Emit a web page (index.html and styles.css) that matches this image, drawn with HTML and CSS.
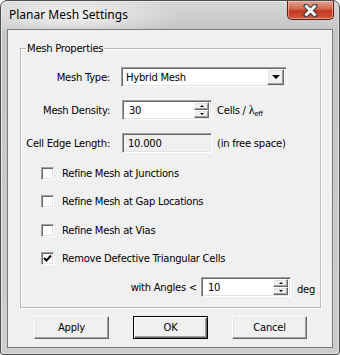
FILE: index.html
```html
<!DOCTYPE html>
<html lang="en">
<head>
    <meta charset="UTF-8">
    <title>Planar Mesh Settings</title>
    <link rel="stylesheet" href="styles.css">
</head>
<body>
    <div class="window">
        <div class="titlebar">
            <span class="title">Planar Mesh Settings</span>
            <div class="close">
                <svg width="17" height="13" viewBox="0 0 17 13">
                    <path d="M4 2 L13 11 M13 2 L4 11" stroke="#3a3a3a" stroke-width="5" stroke-linecap="round"/>
                    <path d="M4.5 2.5 L12.5 10.5 M12.5 2.5 L4.5 10.5" stroke="#ffffff" stroke-width="3" stroke-linecap="square"/>
                </svg>
            </div>
        </div>

        <div class="client">
            <div class="group">
                <span class="group-title">Mesh Properties</span>

                <div class="row first">
                    <label class="caption">Mesh Type:</label>
                    <div class="combo">
                        <span class="combo-text">Hybrid Mesh</span>
                        <span class="combo-btn"><span class="arrow-down"></span></span>
                    </div>
                </div>

                <div class="row">
                    <label class="caption">Mesh Density:</label>
                    <div class="spin">
                        <span class="spin-text">30</span>
                        <span class="spin-btns">
                            <span class="spin-btn"><span class="tri-up"></span></span>
                            <span class="spin-btn"><span class="tri-down"></span></span>
                        </span>
                    </div>
                    <span class="unit">Cells / <span class="lambda">λ</span><sub>eff</sub></span>
                </div>

                <div class="row">
                    <label class="caption">Cell Edge Length:</label>
                    <div class="field readonly">10.000</div>
                    <span class="unit">(in free space)</span>
                </div>

                <div class="checks">
                    <div class="check-row"><span class="box"></span>Refine Mesh at Junctions</div>
                    <div class="check-row"><span class="box"></span>Refine Mesh at Gap Locations</div>
                    <div class="check-row"><span class="box"></span>Refine Mesh at Vias</div>
                    <div class="check-row"><span class="box checked">
                        <svg width="9" height="9" viewBox="0 0 9 9"><path d="M1 4 L3.5 6.5 L8 1.5" stroke="#000" stroke-width="2" fill="none"/></svg>
                    </span>Remove Defective Triangular Cells</div>
                </div>

                <div class="row angles">
                    <label class="caption">with Angles &lt;</label>
                    <div class="spin">
                        <span class="spin-text">10</span>
                        <span class="spin-btns">
                            <span class="spin-btn"><span class="tri-up"></span></span>
                            <span class="spin-btn"><span class="tri-down"></span></span>
                        </span>
                    </div>
                    <span class="unit deg">deg</span>
                </div>
            </div>

            <div class="buttons">
                <button class="btn">Apply</button>
                <button class="btn default">OK</button>
                <button class="btn">Cancel</button>
            </div>
        </div>
    </div>
</body>
</html>
```

FILE: styles.css
```css
* {
    box-sizing: border-box;
}

body {
    margin: 0;
    background: #ffffff;
    font-family: "DejaVu Sans", Tahoma, sans-serif;
    font-size: 10px;
    letter-spacing: -0.25px;
    color: #000;
}

.window {
    width: 340px;
    height: 355px;
    border: 1px solid #4e4e4e;
    border-radius: 7px 7px 3px 3px;
    background:
        radial-gradient(ellipse 110px 22px at 70px 14px, rgba(255, 255, 255, 0.75), rgba(255, 255, 255, 0) 100%),
        linear-gradient(#d6d6d6, #c6c6c6 30px, #cdcdcd);
    box-shadow: inset 1px 1px 0 #e8e8e8, inset -1px -1px 0 #e0e0e0;
}

.titlebar {
    height: 28px;
    display: flex;
    justify-content: space-between;
    align-items: flex-start;
    padding-left: 8px;
}

.title {
    font-family: "Noto Sans", "Open Sans", sans-serif;
    font-size: 12px;
    letter-spacing: 0;
    line-height: 28px;
    color: #000;
}

.close {
    width: 47px;
    height: 19px;
    margin-right: 5px;
    border: 1px solid #5a2018;
    border-top: none;
    border-radius: 0 0 5px 5px;
    background: linear-gradient(#e2a594, #d3634c 45%, #c0391f 55%, #cf5b3f);
    display: flex;
    align-items: center;
    justify-content: center;
    box-shadow: inset 0 0 0 1px rgba(255, 210, 200, 0.5);
}

.client {
    margin: 0 6px;
    height: 319px;
    border: 1px solid #7c7c7c;
    background: #f0f0f0;
}

.group {
    position: relative;
    margin: 18px 11px 0 12px;
    height: 260px;
    border: 1px solid #b9b9b9;
    box-shadow: inset 1px 1px 0 #fff, 1px 1px 0 #fff;
    padding-top: 18px;
}

.group-title {
    position: absolute;
    top: -7px;
    left: 5px;
    padding: 0 1px;
    background: #f0f0f0;
    line-height: 13px;
    font-size: 10px;
}

.row {
    display: flex;
    align-items: center;
    height: 20px;
    margin-top: 13px;
}

.row.first {
    margin-top: 0;
}

.caption {
    width: 89px;
    margin-right: 11px;
    text-align: right;
    white-space: nowrap;
}

.combo,
.spin,
.field {
    height: 20px;
    background: #fff;
    border: 1px solid;
    border-color: #a0a0a0 #fff #fff #a0a0a0;
    box-shadow: inset 1px 1px 0 #696969, inset -1px -1px 0 #e3e3e3;
    display: flex;
    align-items: center;
}

.combo {
    width: 166px;
    padding: 2px;
}

.combo-text {
    flex: 1;
    padding-left: 2px;
}

.combo-btn,
.spin-btn {
    display: flex;
    align-items: center;
    justify-content: center;
    background: #f0f0f0;
    border: 1px solid;
    border-color: #fff #696969 #696969 #fff;
    box-shadow: inset -1px -1px 0 #a0a0a0, inset 1px 1px 0 #e3e3e3;
}

.combo-btn {
    width: 17px;
    height: 16px;
}

.arrow-down {
    width: 0;
    height: 0;
    border-left: 4px solid transparent;
    border-right: 4px solid transparent;
    border-top: 4px solid #000;
}

.spin {
    width: 90px;
    padding: 2px;
    margin-left: 1px;
}

.spin-text {
    flex: 1;
    padding-left: 4px;
}

.spin-btns {
    display: flex;
    flex-direction: column;
    height: 16px;
}

.spin-btn {
    width: 15px;
    height: 8px;
}

.tri-up,
.tri-down {
    width: 0;
    height: 0;
    border-left: 2px solid transparent;
    border-right: 2px solid transparent;
}

.tri-up {
    border-bottom: 2px solid #000;
}

.tri-down {
    border-top: 2px solid #000;
}

.field.readonly {
    width: 90px;
    margin-left: 1px;
    background: #f0f0f0;
    padding-left: 5px;
}

.unit {
    margin-left: 5px;
    white-space: nowrap;
}

.lambda {
    font-family: "Liberation Serif", serif;
    font-size: 12px;
}

sub {
    font-size: 7px;
    vertical-align: -2px;
}

.checks {
    margin-top: 10px;
    padding-left: 20px;
}

.check-row {
    display: flex;
    align-items: center;
    height: 20px;
    margin-bottom: 8.5px;
}

.box {
    width: 13px;
    height: 13px;
    margin-right: 8px;
    background: #fff;
    border: 1px solid;
    border-color: #a0a0a0 #fff #fff #a0a0a0;
    box-shadow: inset 1px 1px 0 #696969, inset -1px -1px 0 #e3e3e3;
    display: flex;
    align-items: center;
    justify-content: center;
}

.row.angles {
    margin-top: 1px;
}

.angles .caption {
    width: 76px;
    margin-left: 100px;
    margin-right: 3px;
}

.unit.deg {
    margin-left: 6px;
    margin-top: 4px;
}

.buttons {
    display: flex;
    gap: 24px;
    padding-left: 26px;
    margin-top: 8px;
}

.btn {
    width: 75px;
    height: 23px;
    font-family: inherit;
    font-size: 10px;
    letter-spacing: -0.25px;
    color: #000;
    background: #f0f0f0;
    border: 1px solid;
    border-color: #fff #696969 #696969 #fff;
    box-shadow: inset -1px -1px 0 #a0a0a0, inset 1px 1px 0 #e3e3e3;
    padding: 0;
}

.btn.default {
    border: 1px solid #000;
    box-shadow: inset 1px 1px 0 #fff, inset -1px -1px 0 #696969, inset -2px -2px 0 #a0a0a0;
}
```
